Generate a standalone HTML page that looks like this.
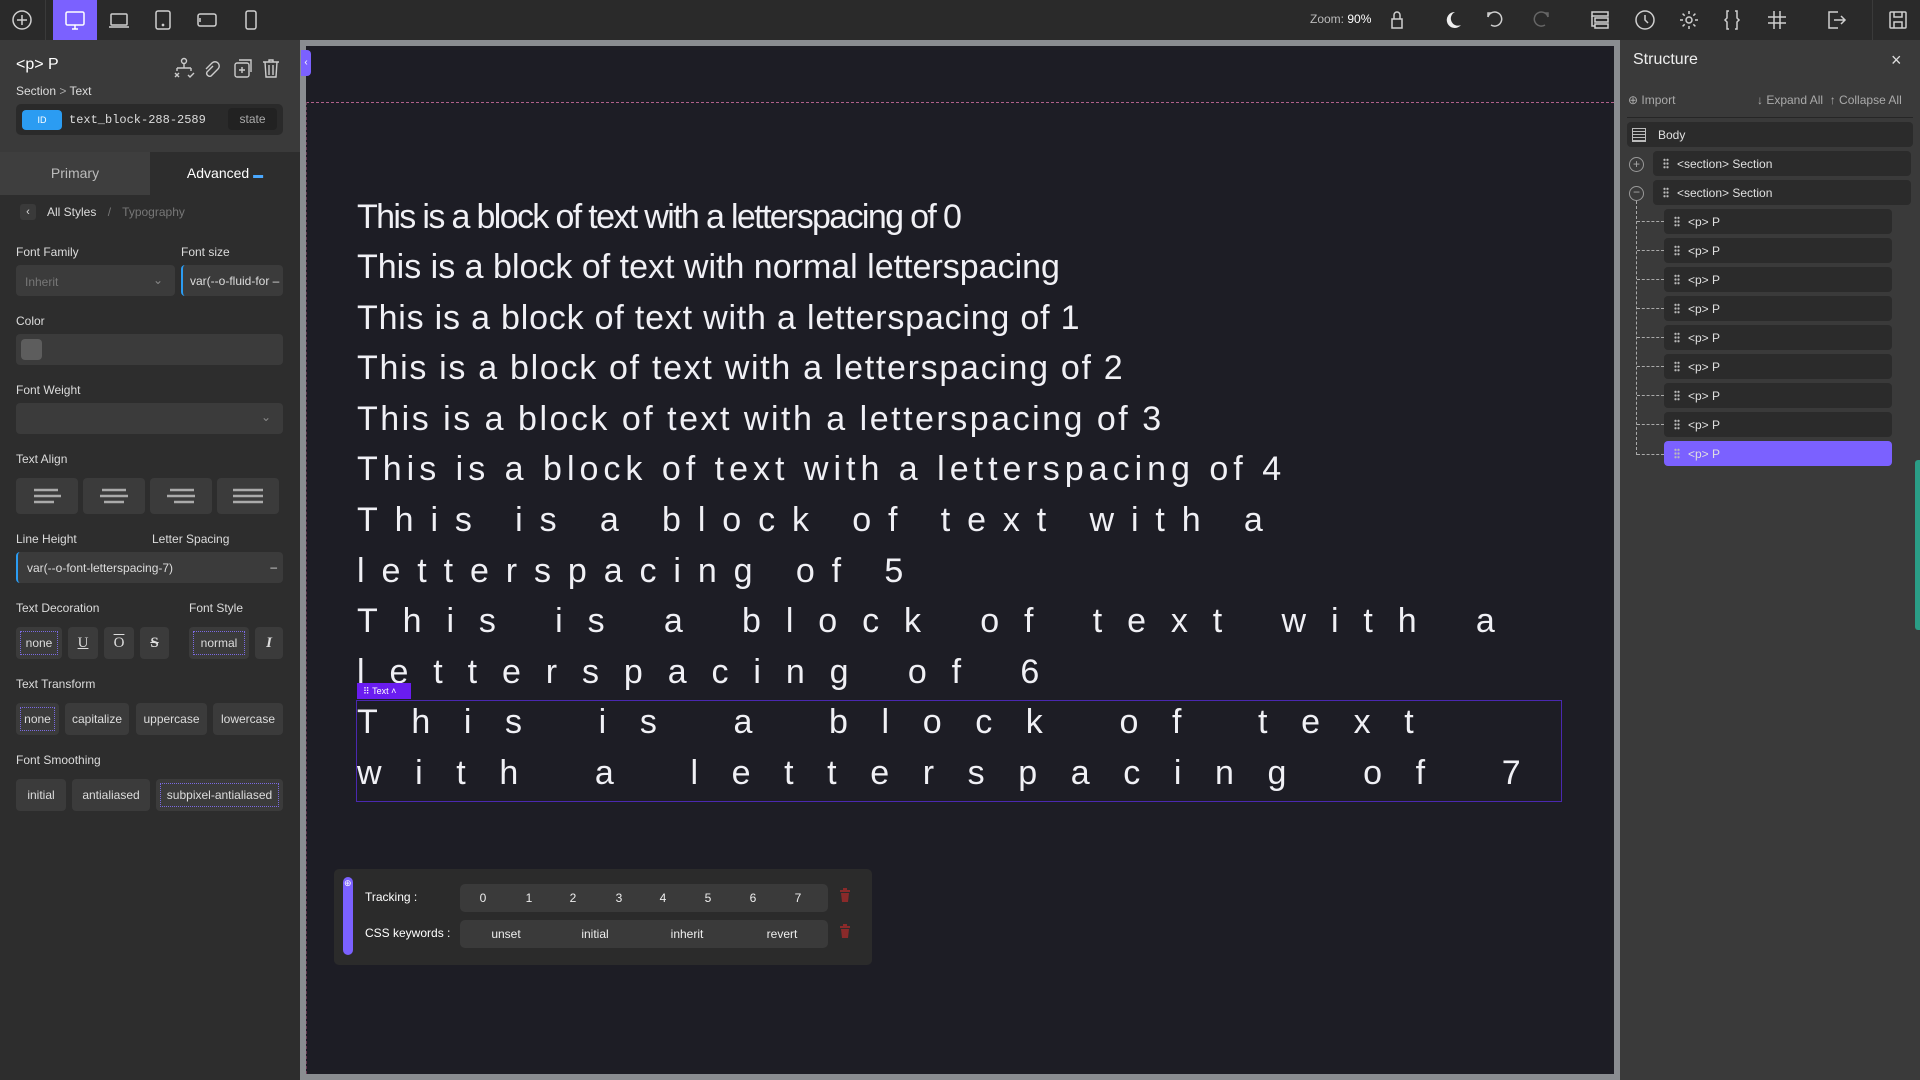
<!DOCTYPE html>
<html><head><meta charset="utf-8"><style>
*{box-sizing:border-box;margin:0;padding:0}
body{width:1920px;height:1080px;overflow:hidden;background:#2c2c2c;font-family:"Liberation Sans",sans-serif;color:#ddd;position:relative}
.abs{position:absolute}
.top{left:0;top:0;width:1920px;height:40px;background:#2a2a2a}
.ico{position:absolute;top:8px;width:24px;height:24px}
.ico svg{width:24px;height:24px;stroke:#cfcfcf;fill:none;stroke-width:1.5}
.lp{left:0;top:40px;width:300px;height:1040px;background:#2d2d2d}
.lphead{left:0;top:40px;width:300px;height:155px;background:#3a3a3a}
.lbl{position:absolute;font-size:12px;color:#dcdcdc}
.inp{position:absolute;background:#3b3b3b;border-radius:4px;height:31px}
.btn{position:absolute;background:#3b3b3b;border-radius:4px;height:32px;font-size:12px;color:#ddd;display:flex;align-items:center;justify-content:center}
.dot{outline:1px dotted #7a6ae0;outline-offset:-5px}
.canvasframe{left:300px;top:40px;width:1320px;height:1040px;background:#8a8d91}
.canvas{left:306px;top:46px;width:1308px;height:1028px;background:#1d1d25}
.txt{position:absolute;left:357px;font-size:34px;color:#f0f0f5;white-space:nowrap;line-height:50.6px}
.rp{left:1620px;top:40px;width:300px;height:1040px;background:#3a3a3a}
.row{position:absolute;background:#2b2b2b;border-radius:4px;height:25px;font-size:12px;color:#e0e0e0;display:flex;align-items:center}
.grip{display:inline-block;width:6px;height:11px;margin:0 8px 0 10px;background:radial-gradient(circle,#bbb 1px,transparent 1.3px) 0 0/3px 3.7px}
.tb{position:absolute;font-size:12px;color:#eee;transform:translateX(-50%)}
</style></head><body>

<div class="abs top"></div>
<div class="abs" style="left:45px;top:0;width:1px;height:40px;background:#3a3a3a"></div>
<div class="abs" style="left:53px;top:0;width:44px;height:40px;background:#7b61ff"></div>
<div class="ico" style="left:10px"><svg viewBox="0 0 24 24"><circle cx="12" cy="12" r="9"/><path d="M12 7v10M7 12h10"/></svg></div>
<div class="ico" style="left:63px"><svg viewBox="0 0 24 24" style="stroke:#fff"><rect x="3" y="4" width="18" height="13" rx="1.5"/><path d="M9 21h6M12 17v4"/></svg></div>
<div class="ico" style="left:107px"><svg viewBox="0 0 24 24"><rect x="4" y="6" width="16" height="11" rx="1"/><path d="M2 19h20"/></svg></div>
<div class="ico" style="left:151px"><svg viewBox="0 0 24 24"><rect x="5" y="3" width="14" height="18" rx="2"/><circle cx="12" cy="17" r=".6"/></svg></div>
<div class="ico" style="left:195px"><svg viewBox="0 0 24 24"><rect x="3" y="6" width="18" height="12" rx="2"/><path d="M5 10v4"/></svg></div>
<div class="ico" style="left:239px"><svg viewBox="0 0 24 24"><rect x="7" y="3" width="10" height="18" rx="2"/></svg></div>

<div class="abs" style="left:1310px;top:12px;font-size:12px;color:#bbb">Zoom: <span style="color:#fff">90%</span></div>
<div class="ico" style="left:1385px"><svg viewBox="0 0 24 24"><rect x="7" y="11" width="10" height="9"/><path d="M9 11V7a3 3 0 0 1 6 0v4"/></svg></div>
<div class="ico" style="left:1441px"><svg viewBox="0 0 24 24" style="fill:#eee;stroke:none"><path d="M14 4a8 8 0 1 0 6 13A7 7 0 0 1 14 4z"/></svg></div>
<div class="ico" style="left:1483px"><svg viewBox="0 0 24 24"><path d="M8 5H5v4"/><path d="M5 9a7 7 0 1 1 3 8"/></svg></div>
<div class="ico" style="left:1529px"><svg viewBox="0 0 24 24" style="stroke:#666"><path d="M16 5h3v4"/><path d="M19 9a7 7 0 1 0-3 8"/></svg></div>
<div class="ico" style="left:1588px"><svg viewBox="0 0 24 24"><rect x="4" y="4" width="16" height="4"/><rect x="7" y="10" width="13" height="4"/><rect x="7" y="16" width="13" height="4"/><path d="M4 8v10h3"/></svg></div>
<div class="ico" style="left:1633px"><svg viewBox="0 0 24 24"><circle cx="12" cy="12" r="9"/><path d="M12 7v5l3 3"/></svg></div>
<div class="ico" style="left:1677px"><svg viewBox="0 0 24 24"><circle cx="12" cy="12" r="3"/><path d="M12 3v3M12 18v3M3 12h3M18 12h3M5.6 5.6l2.1 2.1M16.3 16.3l2.1 2.1M5.6 18.4l2.1-2.1M16.3 7.7l2.1-2.1"/></svg></div>
<div class="ico" style="left:1720px"><svg viewBox="0 0 24 24"><path d="M9 3H7v7l-2 2 2 2v7h2M15 3h2v7l2 2-2 2v7h-2"/></svg></div>
<div class="ico" style="left:1765px"><svg viewBox="0 0 24 24"><path d="M9 3v18M15 3v18M3 9h18M3 15h18"/></svg></div>
<div class="ico" style="left:1824px"><svg viewBox="0 0 24 24"><path d="M14 4H5v16h9M10 12h11M17 8l4 4-4 4"/></svg></div>
<div class="abs" style="left:1872px;top:0;width:1px;height:40px;background:#3a3a3a"></div>
<div class="ico" style="left:1886px"><svg viewBox="0 0 24 24"><rect x="4" y="4" width="16" height="16" rx="1"/><path d="M8 4v5h8V4M8 20v-6h8v6"/></svg></div>

<!-- left panel -->
<div class="abs lp"></div>
<div class="abs lphead"></div>
<div class="abs" style="left:16px;top:56px;font-size:16px;color:#fff">&lt;p&gt; P</div>
<div class="abs" style="left:16px;top:84px;font-size:12px;color:#ddd">Section <span style="color:#aaa">&gt;</span> Text</div>
<svg class="abs" style="left:173px;top:57px" width="110" height="22" viewBox="0 0 110 22" fill="none" stroke="#ccc" stroke-width="1.4"><circle cx="11" cy="4" r="2.5"/><path d="M11 7v4M4 11h14M4 11v3M18 11v3M2 16l4 4M6 16l-4 4M15 18l2 2 4-4"/><path d="M40 9l-6 6a3 3 0 0 0 4 4l7-7a4 4 0 0 0-6-6l-6 6"/><rect x="62" y="6" width="14" height="14" rx="2"/><path d="M66 3h12v12M69 10v6M66 13h6"/><path d="M90 5h16M96 5V3h4v2M92 5l1 15h10l1-15M96 8v10M100 8v10"/></svg>
<div class="abs" style="left:16px;top:104px;width:267px;height:31px;background:#2a2a2a;border-radius:5px"></div>
<div class="abs" style="left:22px;top:110px;width:40px;height:20px;background:#2b9cf2;border-radius:4px;font-size:9px;color:#fff;text-align:center;line-height:20px">ID</div>
<div class="abs" style="left:69px;top:113px;font-family:'Liberation Mono',monospace;font-size:12px;color:#ddd">text_block-288-2589</div>
<div class="abs" style="left:228px;top:108px;width:49px;height:22px;background:#222;border-radius:4px;font-size:12px;color:#aaa;text-align:center;line-height:22px">state</div>
<div class="abs" style="left:0;top:152px;width:150px;height:43px;background:#3e3e3e;font-size:14px;color:#bbb;text-align:center;line-height:43px">Primary</div>
<div class="abs" style="left:150px;top:152px;width:150px;height:43px;background:#2d2d2d;font-size:14px;color:#fff;text-align:center;line-height:43px">Advanced <span style="color:#4aa8ff;font-size:10px">▬</span></div>
<div class="abs" style="left:20px;top:204px;width:16px;height:16px;background:#3a3a3a;border-radius:3px;font-size:11px;text-align:center;line-height:16px">‹</div>
<div class="abs" style="left:47px;top:205px;font-size:12px;color:#ddd">All Styles <span style="color:#777;margin:0 8px">/</span> <span style="color:#777">Typography</span></div>

<div class="lbl" style="left:16px;top:245px">Font Family</div><div class="lbl" style="left:181px;top:245px">Font size</div>
<div class="inp" style="left:16px;top:265px;width:159px;font-size:12px;color:#777;padding:10px 9px">Inherit<span style="position:absolute;right:12px;top:8px;color:#888">⌄</span></div>
<div class="inp" style="left:181px;top:265px;width:102px;border-left:2px solid #2b9cf2;font-size:12px;color:#ddd;padding:9px 7px;white-space:nowrap;overflow:hidden">var(--o-fluid-for –</div>
<div class="lbl" style="left:16px;top:314px">Color</div>
<div class="inp" style="left:16px;top:334px;width:267px"><div style="position:absolute;left:5px;top:5px;width:21px;height:21px;background:#5d5d5d;border-radius:4px"></div></div>
<div class="lbl" style="left:16px;top:383px">Font Weight</div>
<div class="inp" style="left:16px;top:403px;width:267px"><span style="position:absolute;right:12px;top:7px;color:#888;font-size:12px">⌄</span></div>
<div class="lbl" style="left:16px;top:452px">Text Align</div>
<div class="btn" style="left:16px;top:478px;width:62px;height:36px"><svg width="28" height="16"><path d="M1 2h24M1 8h28M1 14h20" stroke="#aaa" stroke-width="2.5"/></svg></div>
<div class="btn" style="left:83px;top:478px;width:62px;height:36px"><svg width="28" height="16"><path d="M2 2h24M0 8h28M4 14h20" stroke="#aaa" stroke-width="2.5"/></svg></div>
<div class="btn" style="left:150px;top:478px;width:62px;height:36px"><svg width="28" height="16"><path d="M3 2h24M0 8h28M7 14h20" stroke="#aaa" stroke-width="2.5"/></svg></div>
<div class="btn" style="left:217px;top:478px;width:62px;height:36px"><svg width="30" height="16"><path d="M0 2h30M0 8h30M0 14h30" stroke="#aaa" stroke-width="2.5"/></svg></div>
<div class="lbl" style="left:16px;top:532px">Line Height</div><div class="lbl" style="left:152px;top:532px">Letter Spacing</div>
<div class="inp" style="left:16px;top:552px;width:267px;border-left:2px solid #2b9cf2;font-size:12px;color:#ddd;padding:9px 9px">var(--o-font-letterspacing-7)<span style="position:absolute;right:6px;top:8px">–</span></div>
<div class="lbl" style="left:16px;top:601px">Text Decoration</div><div class="lbl" style="left:189px;top:601px">Font Style</div>
<div class="btn dot" style="left:16px;top:627px;width:46px">none</div>
<div class="btn" style="left:68px;top:627px;width:30px;font-family:'Liberation Serif',serif;font-size:15px;text-decoration:underline">U</div>
<div class="btn" style="left:104px;top:627px;width:30px;font-family:'Liberation Serif',serif;font-size:15px;text-decoration:overline">O</div>
<div class="btn" style="left:140px;top:627px;width:29px;font-family:'Liberation Serif',serif;font-size:15px;text-decoration:line-through;font-weight:bold">S</div>
<div class="btn dot" style="left:189px;top:627px;width:60px">normal</div>
<div class="btn" style="left:255px;top:627px;width:28px;font-family:'Liberation Serif',serif;font-size:15px;font-style:italic;font-weight:bold">I</div>
<div class="lbl" style="left:16px;top:677px">Text Transform</div>
<div class="btn dot" style="left:16px;top:703px;width:43px">none</div>
<div class="btn" style="left:65px;top:703px;width:64px">capitalize</div>
<div class="btn" style="left:136px;top:703px;width:71px">uppercase</div>
<div class="btn" style="left:213px;top:703px;width:70px">lowercase</div>
<div class="lbl" style="left:16px;top:753px">Font Smoothing</div>
<div class="btn" style="left:16px;top:779px;width:50px">initial</div>
<div class="btn" style="left:72px;top:779px;width:78px">antialiased</div>
<div class="btn dot" style="left:156px;top:779px;width:127px">subpixel-antialiased</div>

<!-- canvas -->
<div class="abs canvasframe"></div>
<div class="abs canvas"></div>
<div class="abs" style="left:301px;top:50px;width:10px;height:26px;background:#7b61ff;border-radius:0 4px 4px 0;font-size:10px;color:#fff;line-height:26px;text-align:center">‹</div>
<div class="abs" style="left:306px;top:102px;width:1308px;border-top:1px dashed #b0608a"></div>
<div class="abs" style="left:306px;top:102px;height:972px;border-left:1px dashed #6a3a55"></div>

<div class="txt" style="top:192px;letter-spacing:-1.65px">This is a block of text with a letterspacing of 0</div>
<div class="txt" style="top:242px">This is a block of text with normal letterspacing</div>
<div class="txt" style="top:293px;letter-spacing:0.8px">This is a block of text with a letterspacing of 1</div>
<div class="txt" style="top:343px;letter-spacing:1.7px">This is a block of text with a letterspacing of 2</div>
<div class="txt" style="top:394px;letter-spacing:2.5px">This is a block of text with a letterspacing of 3</div>
<div class="txt" style="top:444px;letter-spacing:5px">This is a block of text with a letterspacing of 4</div>
<div class="txt" style="top:495px;letter-spacing:16.9px">This is a block of text with a<br>letterspacing of 5</div>
<div class="txt" style="top:596px;letter-spacing:24.9px">This is a block of text with a<br>letterspacing of 6</div>
<div class="abs" style="left:356px;top:700px;width:1206px;height:102px;border:1.5px solid #4a28b0"></div>
<div class="abs" style="left:357px;top:683px;width:54px;height:16px;background:#6a1cf0;font-size:9px;color:#fff;line-height:16px;padding-left:6px">⠿ Text ˄</div>
<div class="txt" style="top:697px;letter-spacing:33.6px">This is a block of text<br>with a letterspacing of 7</div>

<!-- floating panel -->
<div class="abs" style="left:334px;top:869px;width:538px;height:96px;background:#2b2b2b;border-radius:5px"></div>
<div class="abs" style="left:343px;top:877px;width:10px;height:78px;background:#7b61ff;border-radius:5px"></div>
<div class="abs" style="left:344px;top:878px;color:#fff;font-size:9px">⊕</div>
<div class="abs" style="left:365px;top:890px;font-size:12px;color:#fff">Tracking :</div>
<div class="abs" style="left:365px;top:926px;font-size:12px;color:#fff">CSS keywords :</div>
<div class="abs" style="left:460px;top:884px;width:368px;height:28px;background:#3a3a3a;border-radius:5px"></div>
<div class="abs" style="left:460px;top:920px;width:368px;height:28px;background:#3a3a3a;border-radius:5px"></div>
<div class="tb" style="left:483px;top:891px">0</div><div class="tb" style="left:529px;top:891px">1</div><div class="tb" style="left:573px;top:891px">2</div><div class="tb" style="left:619px;top:891px">3</div><div class="tb" style="left:663px;top:891px">4</div><div class="tb" style="left:708px;top:891px">5</div><div class="tb" style="left:753px;top:891px">6</div><div class="tb" style="left:798px;top:891px">7</div>
<div class="tb" style="left:506px;top:927px">unset</div><div class="tb" style="left:595px;top:927px">initial</div><div class="tb" style="left:687px;top:927px">inherit</div><div class="tb" style="left:782px;top:927px">revert</div>
<svg class="abs" style="left:839px;top:888px" width="12" height="60" fill="#8a2a2a"><path d="M1 2h10v2H1zM4 0h4v2H4zM2 5h8l-1 9H3z"/><path d="M1 38h10v2H1zM4 36h4v2H4zM2 41h8l-1 9H3z"/></svg>

<!-- right panel -->
<div class="abs rp"></div>
<div class="abs" style="left:1633px;top:51px;font-size:16px;color:#eee">Structure</div>
<div class="abs" style="left:1891px;top:50px;font-size:18px;color:#ddd">×</div>
<div class="abs" style="left:1628px;top:93px;font-size:12px;color:#aaa">⊕ Import</div>
<div class="abs" style="left:1757px;top:93px;font-size:12px;color:#aaa">↓ Expand All &nbsp;↑ Collapse All</div>
<div class="abs" style="left:1627px;top:117px;width:286px;height:1px;background:#262626"></div>
<div class="row" style="left:1627px;top:122px;width:286px"><span style="display:inline-block;width:14px;height:14px;border:1.5px solid #bbb;margin:0 12px 0 5px;background:repeating-linear-gradient(#2b2b2b 0 2px,#bbb 2px 3px)"></span>Body</div>
<div class="abs" style="left:1629px;top:157px;width:15px;height:15px;border:1.5px solid #999;border-radius:50%;font-size:12px;line-height:12px;text-align:center;color:#aaa">+</div>
<div class="abs" style="left:1629px;top:186px;width:15px;height:15px;border:1.5px solid #999;border-radius:50%;font-size:12px;line-height:11px;text-align:center;color:#aaa">−</div>
<div class="row" style="left:1653px;top:151px;width:258px"><span class="grip"></span>&lt;section&gt; Section</div>
<div class="row" style="left:1653px;top:180px;width:258px"><span class="grip"></span>&lt;section&gt; Section</div>
<div class="abs" style="left:1636px;top:201px;width:1px;height:254px;border-left:1px dashed #aaa"></div>
<div class="row" style="left:1664px;top:209px;width:228px"><span class="grip"></span>&lt;p&gt; P</div>
<div class="row" style="left:1664px;top:238px;width:228px"><span class="grip"></span>&lt;p&gt; P</div>
<div class="row" style="left:1664px;top:267px;width:228px"><span class="grip"></span>&lt;p&gt; P</div>
<div class="row" style="left:1664px;top:296px;width:228px"><span class="grip"></span>&lt;p&gt; P</div>
<div class="row" style="left:1664px;top:325px;width:228px"><span class="grip"></span>&lt;p&gt; P</div>
<div class="row" style="left:1664px;top:354px;width:228px"><span class="grip"></span>&lt;p&gt; P</div>
<div class="row" style="left:1664px;top:383px;width:228px"><span class="grip"></span>&lt;p&gt; P</div>
<div class="row" style="left:1664px;top:412px;width:228px"><span class="grip"></span>&lt;p&gt; P</div>
<div class="row" style="left:1664px;top:441px;width:228px;background:#7b61ff"><span class="grip"></span>&lt;p&gt; P</div>
<div class="abs" style="left:1637px;top:221px;width:27px;border-top:1px dashed #aaa"></div>
<div class="abs" style="left:1637px;top:250px;width:27px;border-top:1px dashed #aaa"></div>
<div class="abs" style="left:1637px;top:279px;width:27px;border-top:1px dashed #aaa"></div>
<div class="abs" style="left:1637px;top:308px;width:27px;border-top:1px dashed #aaa"></div>
<div class="abs" style="left:1637px;top:337px;width:27px;border-top:1px dashed #aaa"></div>
<div class="abs" style="left:1637px;top:366px;width:27px;border-top:1px dashed #aaa"></div>
<div class="abs" style="left:1637px;top:395px;width:27px;border-top:1px dashed #aaa"></div>
<div class="abs" style="left:1637px;top:424px;width:27px;border-top:1px dashed #aaa"></div>
<div class="abs" style="left:1637px;top:454px;width:27px;border-top:1px dashed #aaa"></div>
<div class="abs" style="left:1915px;top:460px;width:5px;height:170px;background:#2a9d86;border-radius:3px 0 0 3px"></div>
</body></html>
